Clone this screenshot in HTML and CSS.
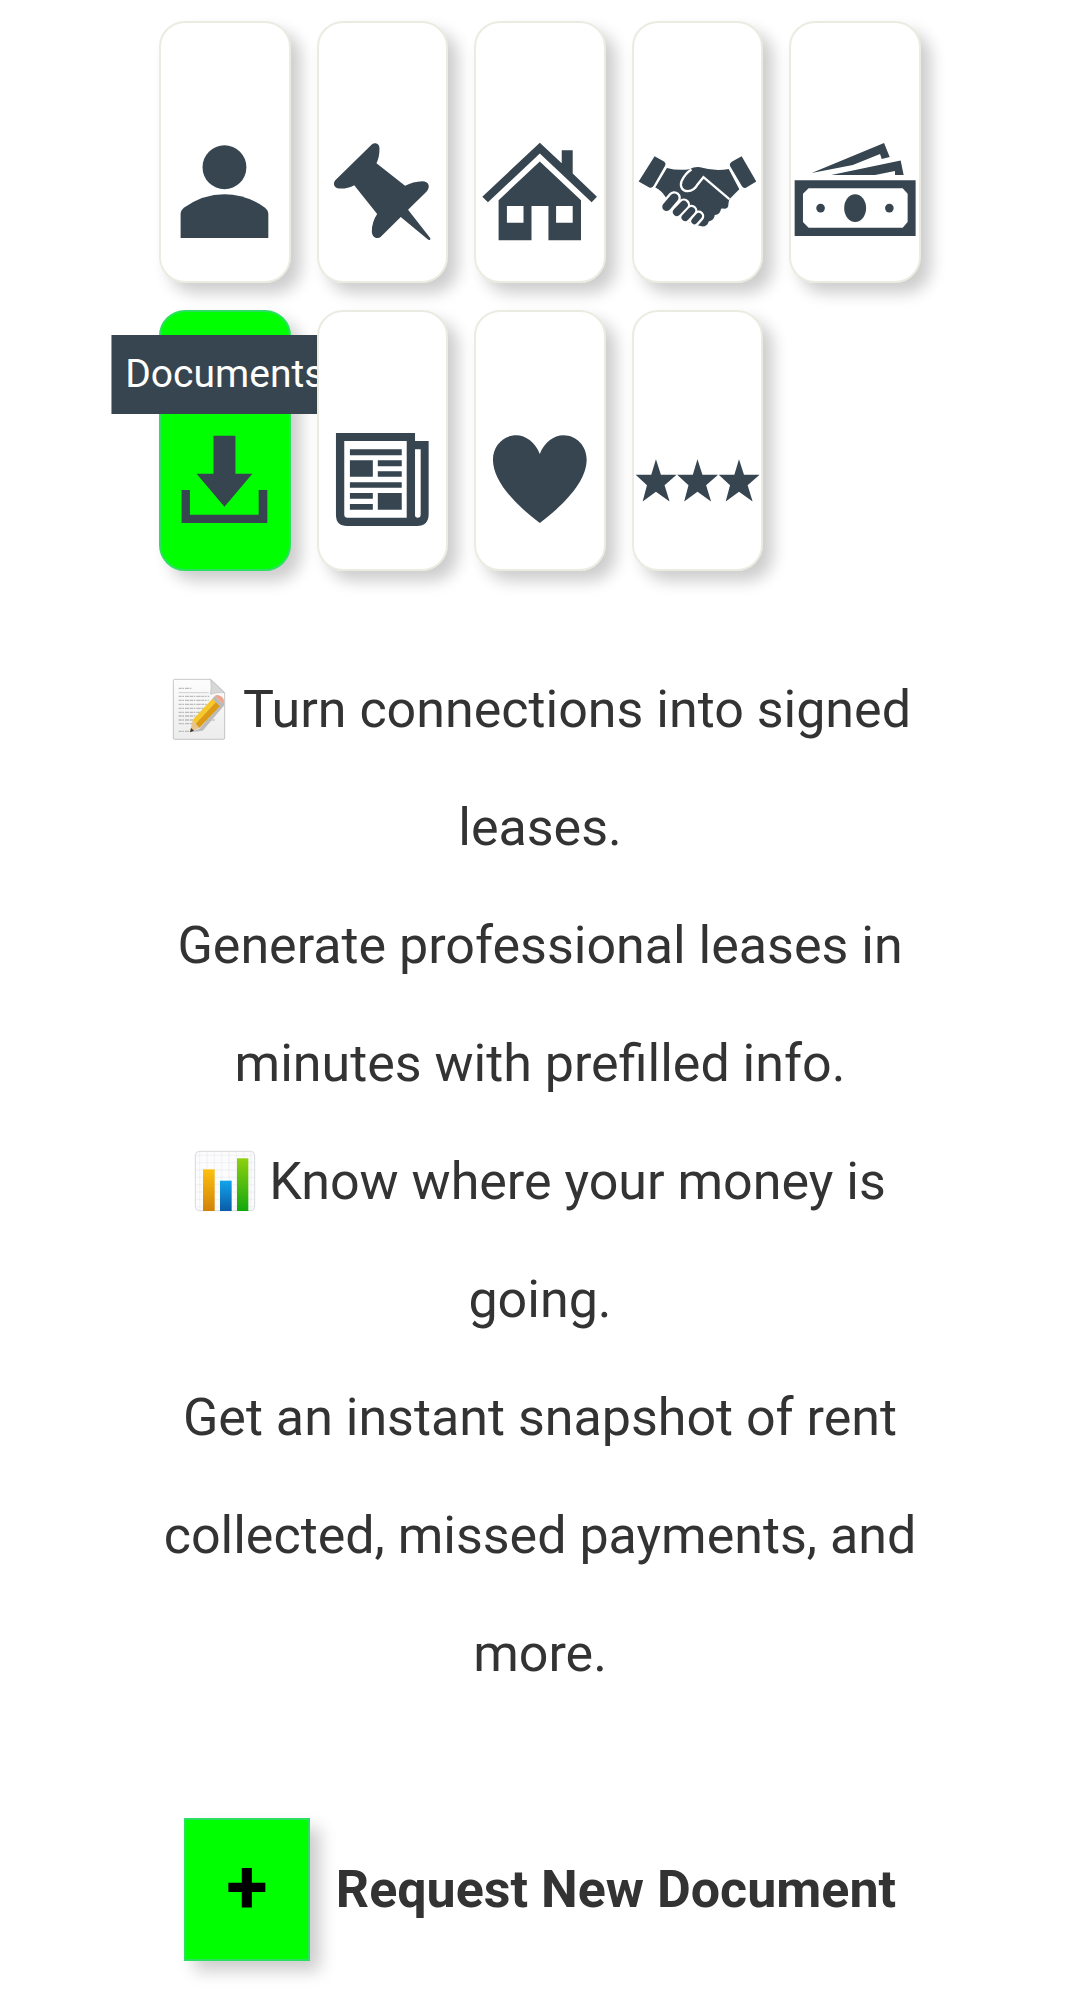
FILE: index.html
```html
<!DOCTYPE html>
<html lang="en">
<head>
    <meta charset="UTF-8">
    <meta name="viewport" content="width=device-width, initial-scale=1.0">
    <title>Documents</title>
    <link rel="stylesheet" href="styles.css">
</head>
<body>
    <nav class="tiles">
        <a href="#" class="tile" aria-label="Profile">
            <svg viewBox="34 380 384 330">
                <circle cx="225" cy="471" r="66"/>
                <path d="M93 684V612Q93 600 104 592Q160 552 225 552Q290 552 346 592Q357 600 357 612V684Z"/>
            </svg>
        </a>
        <a href="#" class="tile" aria-label="Pinned">
            <svg viewBox="507 380 384 330">
                <path d="M665 403C676 394 690 400 689 416Q689 440 680 459L766 527Q790 514 818 513C838 513 843 530 831 544L775 599L841 683C845 689 840 692 834 688L753 621L693 680C681 690 666 682 666 664Q666 636 682 612L613 525Q594 536 568 535C552 533 548 520 556 510Z"/>
            </svg>
        </a>
        <a href="#" class="tile" aria-label="Properties">
            <svg viewBox="48 380 384 330">
                <path d="M240 397L306 459V420H339V490L412 560L396 576L240 430L84 576L67 560Z"/>
                <path fill-rule="evenodd" d="M240 454L364 570V691H266V588H215V691H116V570ZM141 588V638H191V588ZM289 588V638H339V588Z"/>
            </svg>
        </a>
        <a href="#" class="tile" aria-label="Connections">
            <svg viewBox="521 380 384 330">
                <path d="M583 438L610 453Q619 459 614 467L580 527Q575 535 567 532L535 514Z"/>
                <path d="M845 438L818 453Q807 459 810 467L845 527Q850 536 858 533L889 514Z"/>
                <path d="M620 473Q652 482 688 477Q702 469 720 471Q765 484 806 476L838 537L808 567Q805 576 805 584Q805 594 795 596Q786 595 783 596Q781 613 764 615Q763 631 746 634Q741 650 725 649L690 640L617 562Q605 542 585 532Z"/>
                <path class="line" d="M694 478C680 486 671 499 664 513C658 530 667 543 683 543C700 543 707 533 713 522L730 501L808 567"/>
                <g class="fingers-gap">
                    <path stroke-width="40" d="M619 590L642 563"/>
                    <path stroke-width="38" d="M650 606L671 584"/>
                    <path stroke-width="36" d="M675 622L694 602"/>
                    <path stroke-width="33" d="M703 633L716 618"/>
                </g>
                <g class="fingers">
                    <path stroke-width="26" d="M619 590L642 563"/>
                    <path stroke-width="24" d="M650 606L671 584"/>
                    <path stroke-width="22" d="M675 622L694 602"/>
                    <path stroke-width="19" d="M703 633L716 618"/>
                </g>
            </svg>
        </a>
        <a href="#" class="tile" aria-label="Payments">
            <svg viewBox="62 380 384 330">
                <path d="M124 488L342 398L359 440L335 446L330 431L248 464Z"/>
                <path d="M183 494L392 451L401 494H375V482L315 494Z"/>
                <path fill-rule="evenodd" d="M73 510H437V678H73ZM115 534L98 551V636L115 653H398L413 636V551L398 534Z"/>
                <ellipse cx="255" cy="594" rx="33" ry="42"/>
                <circle cx="151" cy="594" r="13"/>
                <circle cx="358" cy="594" r="13"/>
            </svg>
        </a>
        <a href="#" class="tile active" aria-label="Documents">
            <span class="tooltip">Documents</span>
            <svg viewBox="184 377 384 330">
                <path d="M342 406H408V521H459L375 620L291 521H342Z"/>
                <path d="M246 570H271V644H478V570H504V669H246Z"/>
            </svg>
        </a>
        <a href="#" class="tile" aria-label="News">
            <svg viewBox="657 377 384 330">
                <path fill-rule="evenodd" d="M708 398H946V422H987V642Q987 678 952 678H742Q708 678 708 644ZM733 422V644Q733 653 743 653H921V422ZM946 447V645Q946 653 954 653Q963 653 963 644V447Z"/>
                <path d="M750 447H906V465H750ZM750 480H819V530H750ZM834 480H906V498H834ZM834 513H906V530H834ZM750 546H906V563H750ZM750 579H819V596H750ZM750 612H819V629H750ZM834 579H906V629H834Z"/>
            </svg>
        </a>
        <a href="#" class="tile" aria-label="Favorites">
            <svg viewBox="48 377 384 330">
                <path d="M240 461C253 427 282 405 311 405C351 405 381 438 381 478C381 540 322 607 240 669C158 607 99 540 99 478C99 438 129 405 169 405C198 405 227 427 240 461Z"/>
            </svg>
        </a>
        <a href="#" class="tile" aria-label="Reviews">
            <svg viewBox="521 377 384 330">
                <path id="star" d="M587 477L602 524H649L613 555L628 604L587 575L547 604L560 555L526 524H573Z"/>
                <use href="#star" x="125"/>
                <use href="#star" x="250"/>
            </svg>
        </a>
    </nav>

    <main class="content">
        <p>
            <svg class="emoji" viewBox="21 24 186 186" role="img" aria-label="Memo">
                <defs>
                    <linearGradient id="paper" x1="0" y1="0" x2="0" y2="1">
                        <stop offset="0" stop-color="#fdfdfd"/>
                        <stop offset="1" stop-color="#ececec"/>
                    </linearGradient>
                </defs>
                <path fill="url(#paper)" stroke="#aaa" stroke-width="2" d="M38 28H146L188 68V204Q188 208 184 208H38Q34 208 34 204V32Q34 28 38 28Z"/>
                <path fill="#d8d8d8" stroke="#999" d="M146 29Q149 54 145 73Q165 66 187 68Z"/>
                <path stroke="#bbb" stroke-width="2" d="M50 68H140"/>
                <path stroke="#bbb" stroke-width="4" stroke-dasharray="9 2 5 3 13 2" d="M50 55H88M50 79H142M50 91H140M50 103H136M50 115H128M50 127H118M50 138H110M50 150H158M50 161H94M50 184H82"/>
                <path fill="#bbb" d="M86 187L112 176L158 124L186 92L187 106L122 182Z"/>
                <path fill="#e8c48c" d="M84 187L92 150L112 174Z"/>
                <path fill="#f6c829" d="M92 150L151 86L162 95L101 161Z"/>
                <path fill="#dc9b12" d="M101 161L162 95L174 108L112 174Z"/>
                <path fill="#b9b9b9" d="M151 86L158 78L181 100L174 108Z"/>
                <path fill="#eba58c" d="M158 78Q167 70 180 81Q191 92 181 100Z"/>
                <path fill="#333" d="M84 187L87 174L96 182Z"/>
            </svg>
            Turn connections into signed leases.
        </p>
        <p>Generate professional leases in minutes with prefilled info.</p>
        <p>
            <svg class="emoji" viewBox="63 60 186 186" role="img" aria-label="Bar chart">
                <defs>
                    <linearGradient id="orange" x1="0" y1="0" x2="0" y2="1">
                        <stop offset="0" stop-color="#fcc010"/>
                        <stop offset="1" stop-color="#d28208"/>
                    </linearGradient>
                    <linearGradient id="blue" x1="0" y1="0" x2="0" y2="1">
                        <stop offset="0" stop-color="#12a5ea"/>
                        <stop offset="1" stop-color="#0a5ba8"/>
                    </linearGradient>
                    <linearGradient id="green" x1="0" y1="0" x2="0" y2="1">
                        <stop offset="0" stop-color="#8fd010"/>
                        <stop offset="1" stop-color="#12a80c"/>
                    </linearGradient>
                </defs>
                <rect x="67" y="64" width="178" height="178" rx="12" fill="#fcfcfd" stroke="#c4c8ce" stroke-width="2"/>
                <path stroke="#dcdee4" d="M80 65V241M102 65V241M124 65V241M146 65V241M168 65V241M190 65V241M212 65V241M234 65V241M68 76H244M68 98H244M68 120H244M68 142H244M68 164H244M68 186H244M68 208H244M68 230H244"/>
                <rect x="90" y="118" width="35" height="125" fill="url(#orange)"/>
                <rect x="141" y="152" width="35" height="91" fill="url(#blue)"/>
                <rect x="192" y="85" width="34" height="158" fill="url(#green)"/>
            </svg>
            Know where your money is going.
        </p>
        <p>Get an instant snapshot of rent collected, missed payments, and more.</p>
    </main>

    <div class="request">
        <button class="add-btn" id="add" aria-labelledby="add-label">+</button>
        <label for="add" id="add-label">Request New Document</label>
    </div>
</body>
</html>
```

FILE: styles.css
```css
* {
    box-sizing: border-box;
}
body {
    margin: 0;
    padding: 21px 159px 34px;
    font-family: Roboto, sans-serif;
    font-size: 52px;
    color: #333;
    background-color: #fff;
}
.tiles {
    display: grid;
    grid-template-columns: repeat(5, 1fr);
    gap: 27px 26px;
}
.tile {
    position: relative;
    padding: 114px 0 34px;
    border: 2px solid #ecebe2;
    border-radius: 26px;
    background-color: #fff;
    box-shadow: 10px 10px 16px rgba(0, 0, 0, 0.2);
}
.tile svg {
    display: block;
    width: 100%;
    fill: #36454f;
}
.tile .line {
    fill: none;
    stroke: #fff;
    stroke-width: 7;
}
.fingers,
.fingers-gap {
    stroke: #36454f;
    stroke-linecap: round;
}
.fingers-gap {
    stroke: #fff;
}
.tile.active {
    background-color: #0f0;
    border-color: #2be060;
}
.tooltip {
    position: absolute;
    top: 23px;
    left: 50%;
    transform: translateX(-50%);
    padding: 0 14px;
    font-size: 39px;
    line-height: 79px;
    color: #fff;
    background-color: #36454f;
}
.content {
    margin-top: 80px;
    text-align: center;
    line-height: 118px;
}
.content p {
    margin: 0;
}
.emoji {
    width: 62px;
    height: 62px;
    vertical-align: -13px;
}
.request {
    display: flex;
    justify-content: center;
    align-items: center;
    gap: 26px;
    margin-top: 105px;
    font-weight: bold;
}
.add-btn {
    width: 126px;
    height: 143px;
    padding: 0 0 6px;
    border: 2px solid #2be060;
    background-color: #0f0;
    color: #000;
    font-family: inherit;
    font-size: 76px;
    font-weight: bold;
    box-shadow: 10px 10px 16px rgba(0, 0, 0, 0.2);
    cursor: pointer;
}
```
